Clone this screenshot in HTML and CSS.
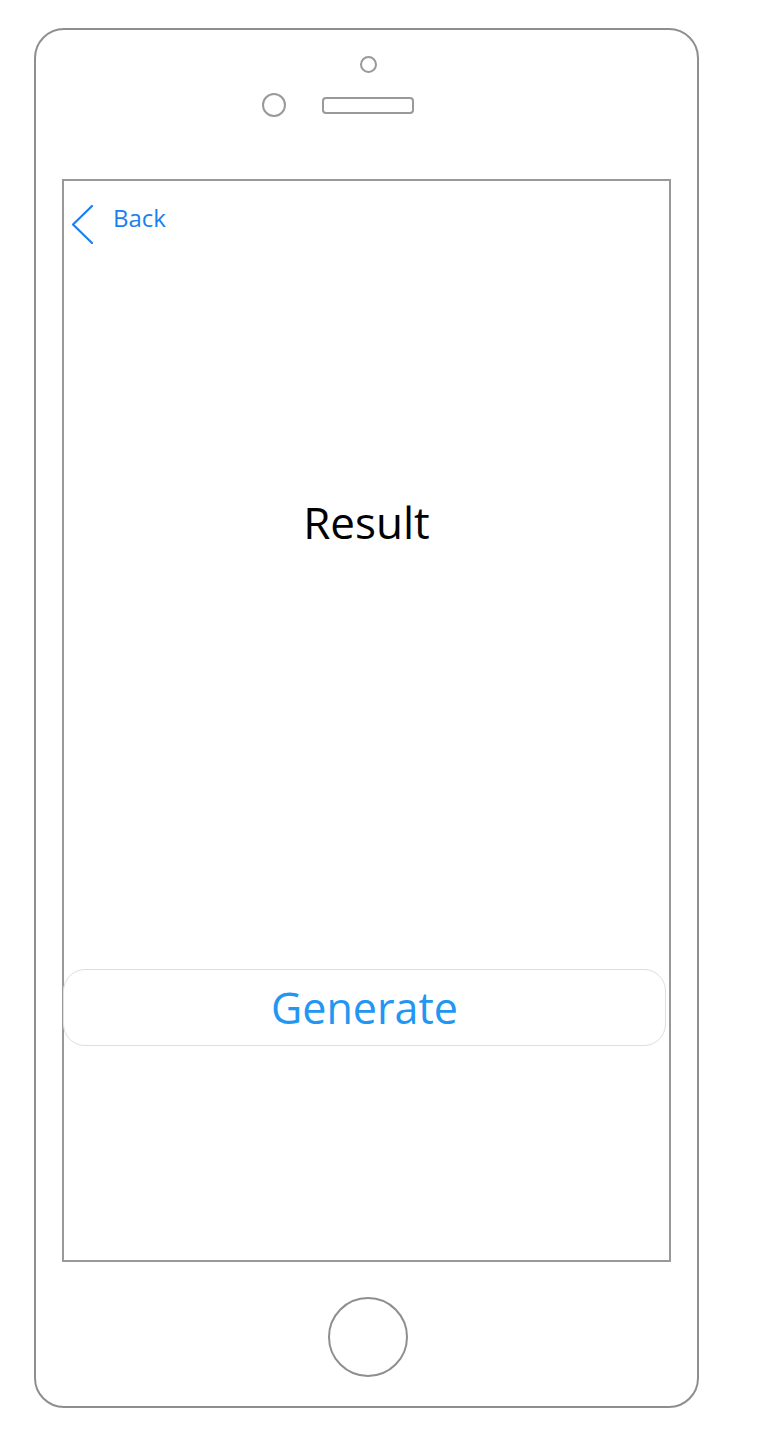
FILE: index.html
```html
<!DOCTYPE html>
<html>
<head>
<meta charset="utf-8">
<link rel="stylesheet" href="styles.css">
</head>
<body>
<div class="phone">
  <div class="top">
    <div class="cam"></div>
    <div class="sensors">
      <div class="lens"></div>
      <div class="speaker"></div>
      <div class="spacer"></div>
    </div>
  </div>
  <div class="screen">
    <div class="nav">
      <svg class="chev" width="22" height="39" viewBox="0 0 22 39"><path d="M21 1 L2 19.5 L21 38" fill="none" stroke="#1a7ff0" stroke-width="2.2" stroke-linecap="round" stroke-linejoin="round"/></svg>
      <span class="back">Back</span>
    </div>
    <h1 class="title">Result</h1>
    <button class="generate">Generate</button>
  </div>
  <div class="bottom">
    <div class="home"></div>
  </div>
</div>
</body>
</html>
```
FILE: styles.css
```css
* { box-sizing: border-box; }
html, body { margin: 0; padding: 0; background: #ffffff; }
body { font-family: "Open Sans", "Noto Sans", sans-serif; width: 762px; height: 1430px; overflow: hidden; }

.phone {
  margin: 28px 0 0 34px;
  width: 665px;
  height: 1380px;
  border: 2px solid #8e8e8e;
  border-radius: 30px;
  display: flex;
  flex-direction: column;
}

.top {
  height: 149px;
  display: flex;
  flex-direction: column;
  align-items: center;
  padding-left: 3px;
}
.cam {
  margin-top: 26px;
  width: 17px;
  height: 17px;
  border: 2px solid #999;
  border-radius: 50%;
}
.sensors {
  margin-top: 20px;
  display: flex;
  align-items: center;
  height: 24px;
}
.lens {
  width: 24px;
  height: 24px;
  border: 2px solid #999;
  border-radius: 50%;
}
.speaker {
  margin-left: 36px;
  width: 92px;
  height: 17px;
  border: 2px solid #999;
  border-radius: 4px;
}
.spacer { width: 60px; }

.screen {
  margin-left: 26px;
  width: 609px;
  height: 1083px;
  border: 2px solid #999;
  display: flex;
  flex-direction: column;
}
.nav {
  margin-top: 24px;
  display: flex;
  align-items: flex-start;
  height: 39px;
}
.chev { margin-left: 7px; display: block; }
.back {
  margin-left: 20px;
  margin-top: 1px;
  font-size: 24px;
  line-height: 1;
  color: #1a7ff0;
}
.title {
  margin: 256px 0 0 0;
  font-size: 44px;
  line-height: 1;
  font-weight: 400;
  color: #000;
  text-align: center;
}
.generate {
  margin: 425px 0 0 -1px;
  width: 603px;
  height: 77px;
  border: 1px solid #dedede;
  border-radius: 22px;
  background: #fff;
  font-family: "Open Sans", "Noto Sans", sans-serif;
  font-size: 43px;
  line-height: 75px;
  padding: 0;
  color: #2196f3;
  text-align: center;
}

.bottom {
  display: flex;
  justify-content: center;
  padding-left: 3px;
}
.home {
  margin-top: 35px;
  width: 80px;
  height: 80px;
  border: 2px solid #8e8e8e;
  border-radius: 50%;
}
```
